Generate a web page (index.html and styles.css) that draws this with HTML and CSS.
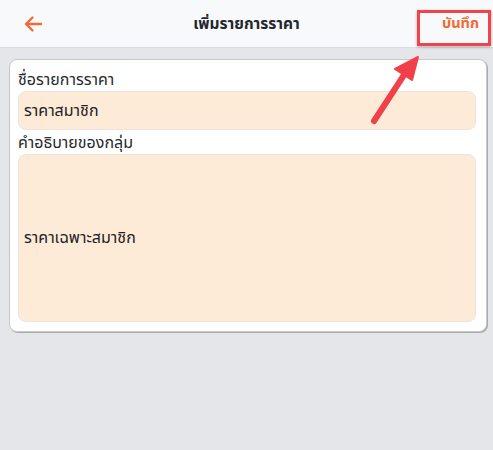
FILE: index.html
```html
<!DOCTYPE html>
<html lang="th">
<head>
<meta charset="utf-8">
<link rel="stylesheet" href="styles.css">
</head>
<body>
<div class="page">
  <header class="topbar">
    <button class="back" aria-label="back">
      <svg width="20" height="18" viewBox="0 0 20 18"><path d="M18 9H3M9.5 2.5L3 9l6.5 6.5" fill="none" stroke="#f26a35" stroke-width="2.4" stroke-linecap="round" stroke-linejoin="round"/></svg>
    </button>
    <h1 class="title">เพิ่มรายการราคา</h1>
    <span class="save">บันทึก</span>
  </header>
  <main class="content">
    <section class="card">
      <label class="label">ชื่อรายการราคา</label>
      <div class="field">ราคาสมาชิก</div>
      <label class="label">คำอธิบายของกลุ่ม</label>
      <div class="field area">ราคาเฉพาะสมาชิก</div>
    </section>
  </main>
  <div class="highlight"></div>
  <svg class="pointer" width="80" height="90" viewBox="0 0 80 90">
    <path d="M12 73L42 27" stroke="#f2404a" stroke-width="6" stroke-linecap="round"/>
    <path d="M56 9L33 21L50 32Z" fill="#f2404a" stroke="#f2404a" stroke-width="2" stroke-linejoin="round"/>
  </svg>
</div>
</body>
</html>
```
FILE: styles.css
```css
* { box-sizing: border-box; }
html, body { margin: 0; padding: 0; }
body {
  background: #e5e6ea;
  font-family: "Noto Sans", "Noto Sans Thai", "DejaVu Sans", sans-serif;
  color: #1f2226;
}
.page { position: relative; width: 493px; height: 450px; }
.topbar {
  height: 48px;
  background: #f8f9fb;
  border-bottom: 1px solid #dcdde2;
  display: grid;
  grid-template-columns: 1fr auto 1fr;
  align-items: center;
  padding: 0 14px;
}
.back { border: 0; background: none; padding: 0; width: 20px; height: 18px; display: flex; margin-left: 9px; }
.title {
  margin: 0;
  font-size: 15.5px;
  font-weight: 700;
  color: #23262b;
}
.save { justify-self: end; font-size: 14.5px; font-weight: 700; color: #f26a35; }
.content { padding: 11px 6px 0 9px; }
.card {
  background: #fff;
  border: 1px solid #c8c9ce;
  border-radius: 8px;
  box-shadow: 1px 1px 0 #a9abb0;
  padding: 7px 10px 9px 8px;
  display: flex;
  flex-direction: column;
}
.label { font-size: 16px; line-height: 24px; color: #26292d; }
.field {
  background: #fdebd7;
  border: 1px solid #ebe5de;
  border-radius: 8px;
  height: 39px;
  display: flex;
  align-items: center;
  padding-left: 5px;
  font-size: 16px;
  color: #1f2226;
}
.field.area { height: 168px; }
.highlight {
  position: absolute;
  left: 417px;
  top: 10px;
  width: 74px;
  height: 36px;
  border: 3px solid #f0434c;
  box-shadow: 0 1px 3px rgba(0,0,0,0.3);
}
.pointer { position: absolute; left: 362px; top: 48px; }
```
